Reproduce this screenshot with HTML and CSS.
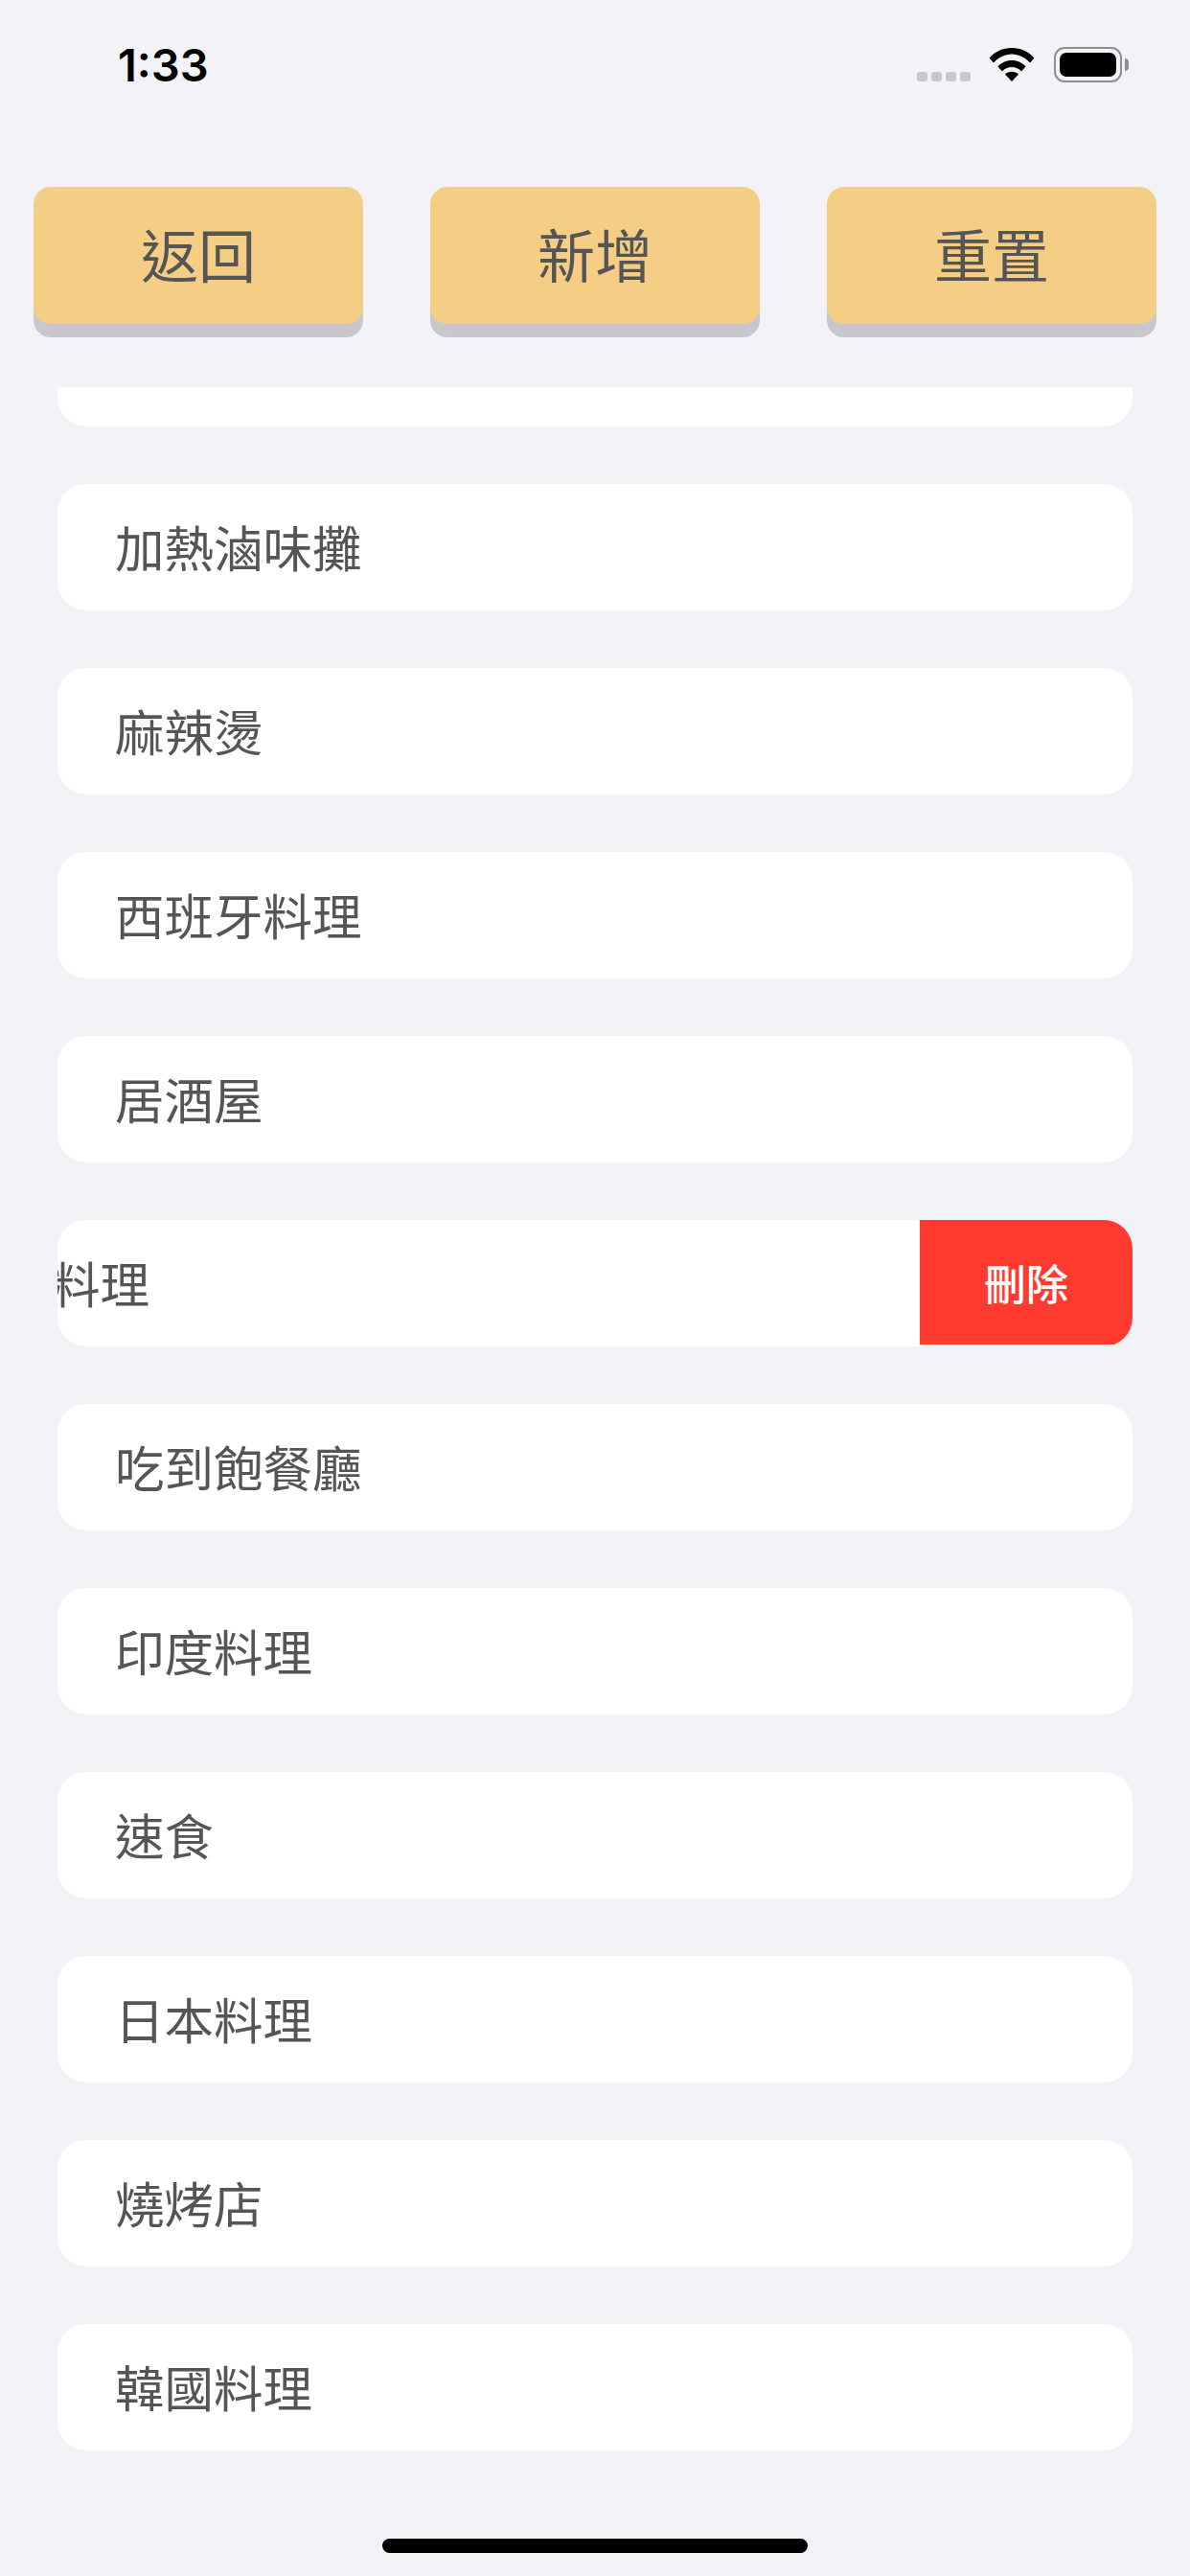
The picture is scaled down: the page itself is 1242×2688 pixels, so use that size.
FILE: index.html
```html
<!DOCTYPE html>
<html lang="zh-Hant">
<head>
    <meta charset="UTF-8">
    <meta name="viewport" content="width=device-width, initial-scale=1.0">
    <title>分類列表</title>
    <link rel="stylesheet" href="styles.css">
</head>
<body>
    <div class="status-bar">
        <span class="time">1:33</span>
        <div class="status-icons">
            <div class="signal">
                <span></span><span></span><span></span><span></span>
            </div>
            <svg class="wifi" width="48" height="36" viewBox="0 0 48 36">
                <path d="M0.5 11.5C6.5 5 14.5 1 24 1s17.500 4 23.500 10.500l-4.500 5C38 11 31.500 7.500 24 7.500S10 11 5 16.500z"/>
                <path d="M9.500 20.500C13 16.500 18 14 24 14s11 2.500 14.500 6.500l-4.500 5C31.500 22.500 28 21 24 21s-7.500 1.500-10 4.500z"/>
                <path d="M17 28.500C18.800 26.700 21.200 25.700 24 25.700s5.200 1 7 2.800L24 36z"/>
            </svg>
            <div class="battery">
                <div class="battery-body"><div class="battery-fill"></div></div>
                <div class="battery-nub"></div>
            </div>
        </div>
    </div>

    <div class="toolbar">
        <button class="tool-btn">返回</button>
        <button class="tool-btn">新增</button>
        <button class="tool-btn">重置</button>
    </div>

    <div class="list">
        <div class="row row-cut"></div>
        <div class="row">加熱滷味攤</div>
        <div class="row">麻辣燙</div>
        <div class="row">西班牙料理</div>
        <div class="row">居酒屋</div>
        <div class="row row-swiped">
            <span class="swiped-text">料理</span>
            <div class="delete-btn">刪除</div>
        </div>
        <div class="row">吃到飽餐廳</div>
        <div class="row">印度料理</div>
        <div class="row">速食</div>
        <div class="row">日本料理</div>
        <div class="row">燒烤店</div>
        <div class="row">韓國料理</div>
    </div>

    <div class="home-bar"></div>
</body>
</html>
```

FILE: styles.css
```css
* {
    box-sizing: border-box;
}

body {
    margin: 0;
    width: 1242px;
    height: 2688px;
    overflow: hidden;
    background-color: #f2f2f7;
    font-family: "Noto Sans CJK TC", "Noto Sans", sans-serif;
    color: #555555;
    display: flex;
    flex-direction: column;
}

/* Status bar */
.status-bar {
    height: 195px;
    padding: 49px 64px 0 123px;
    display: flex;
    justify-content: space-between;
    align-items: flex-start;
}

.time {
    font-family: Inter, "Liberation Sans", sans-serif;
    font-size: 47px;
    font-weight: 600;
    line-height: 37px;
    color: #000000;
}

.status-icons {
    display: flex;
    align-items: flex-start;
}

.signal {
    display: flex;
    gap: 4px;
    margin-top: 26px;
    margin-right: 19px;
}

.signal span {
    width: 11px;
    height: 10px;
    border-radius: 3px;
    background-color: #c7c7cc;
}

.wifi {
    fill: #000000;
    margin-right: 20px;
}

.battery {
    display: flex;
    align-items: center;
    gap: 3px;
}

.battery-body {
    width: 71px;
    height: 37px;
    padding: 4px;
    border: 2px solid #8e8e93;
    border-radius: 11px;
    background-color: #f2f2f7;
}

.battery-fill {
    height: 100%;
    border-radius: 7px;
    background-color: #000000;
}

.battery-nub {
    width: 4px;
    height: 13px;
    border-radius: 0 4px 4px 0;
    background-color: #8e8e93;
}

/* Top buttons */
.toolbar {
    height: 209px;
    padding: 0 35px;
    display: flex;
    justify-content: space-between;
    align-items: flex-start;
}

.tool-btn {
    width: 344px;
    height: 143px;
    border: none;
    border-radius: 18px;
    background-color: #f5ce85;
    box-shadow: 0 14px 0 #c8c7cc;
    font-family: inherit;
    font-size: 60px;
    color: #555555;
    padding: 0 0 6px;
}

/* Category list */
.list {
    flex: 1;
    padding: 0 60px;
    display: flex;
    flex-direction: column;
    gap: 60px;
    overflow: hidden;
}

.row {
    height: 132px;
    flex-shrink: 0;
    padding-left: 60px;
    padding-bottom: 4px;
    border-radius: 30px;
    background-color: #ffffff;
    font-size: 51.500px;
    display: flex;
    align-items: center;
}

.row-cut {
    height: 41px;
    padding-bottom: 0;
    border-radius: 0 0 30px 30px;
}

.row-swiped {
    padding-left: 0;
    padding-bottom: 0;
    justify-content: space-between;
    overflow: hidden;
}

.swiped-text {
    margin-left: -7px;
    margin-bottom: 4px;
}

.delete-btn {
    width: 222px;
    height: 130px;
    align-self: flex-start;
    background-color: #ff3b30;
    color: #ffffff;
    font-size: 44px;
    font-weight: 500;
    display: flex;
    align-items: center;
    justify-content: center;
}

/* Home indicator */
.home-bar {
    flex-shrink: 0;
    width: 444px;
    height: 15px;
    margin: 0 auto 24px;
    border-radius: 8px;
    background-color: #000000;
}
```
